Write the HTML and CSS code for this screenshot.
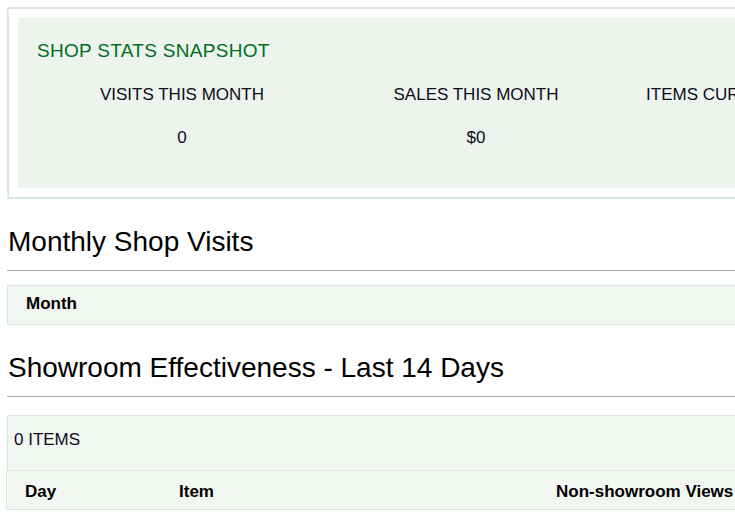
FILE: index.html
```html
<!DOCTYPE html>
<html lang="en">
<head>
<meta charset="utf-8">
<title>Shop Stats</title>
<link rel="stylesheet" href="styles.css">
</head>
<body>
<div class="page">
  <section class="stats">
    <div class="stats-panel">
      <h2 class="stats-title">SHOP STATS SNAPSHOT</h2>
      <div class="stats-grid">
        <div class="stat">
          <div class="stat-label">VISITS THIS MONTH</div>
          <div class="stat-value">0</div>
        </div>
        <div class="stat">
          <div class="stat-label">SALES THIS MONTH</div>
          <div class="stat-value">$0</div>
        </div>
        <div class="stat">
          <div class="stat-label">ITEMS CURRENTLY FOR SALE</div>
          <div class="stat-value">0</div>
        </div>
      </div>
    </div>
  </section>

  <h1 class="section-heading first">Monthly Shop Visits</h1>
  <hr class="rule">
  <div class="table-box month-table">
    <div class="th">Month</div>
  </div>

  <h1 class="section-heading">Showroom Effectiveness - Last 14 Days</h1>
  <hr class="rule rule-second">
  <div class="table-box items-caption">0 ITEMS</div>
  <div class="table-box items-head">
    <div class="th col-day">Day</div>
    <div class="th col-item">Item</div>
    <div class="th col-views">Non-showroom Views</div>
  </div>
</div>
</body>
</html>
```
FILE: styles.css
```css
html {
  overflow: hidden;
}
body {
  margin: 0;
  background: #ffffff;
  font-family: "Liberation Sans", Arial, sans-serif;
  color: #111;
}
.page {
  width: 1000px;
  padding: 7px;
}
.stats {
  border: 2px solid #d9eadb;
  padding: 9px;
}
.stats-panel {
  background: #edf4ed;
  padding: 22px 0 40px 17px;
}
.stats-title {
  margin: 0 0 0 2px;
  font-size: 19px;
  line-height: 22px;
  font-weight: normal;
  letter-spacing: 0.3px;
  color: #006d22;
}
.stats-grid {
  display: grid;
  grid-template-columns: 294px 294px 294px;
  margin-top: 23px;
}
.stat {
  text-align: center;
  color: #0c0c1a;
}
.stat-label {
  font-size: 17px;
  line-height: 20px;
}
.stat-value {
  font-size: 17px;
  line-height: 20px;
  margin-top: 23px;
}
.section-heading {
  margin: 27px 0 12px 1px;
  font-size: 28px;
  line-height: 32px;
  font-weight: normal;
  color: #000;
}
.rule {
  margin: 0 0 14px 0;
  border: 0;
  border-top: 1px solid #aaaaaa;
  height: 0;
}
.rule-second {
  margin-bottom: 18px;
}
.table-box {
  background: #f2f7f2;
  border: 1px solid #d7e9d9;
}
.th {
  font-weight: bold;
  font-size: 17px;
  line-height: 19px;
  color: #000;
}
.month-table {
  padding: 8px 18px 11px 18px;
}
.items-caption {
  padding: 14px 6px 20px 6px;
  font-size: 17px;
  line-height: 20px;
  color: #0c0c1a;
}
.items-head {
  border-top: 0;
  display: grid;
  grid-template-columns: 154px 377px auto;
  padding: 11px 18px 8px 18px;
  margin-left: -1px;
}
```
